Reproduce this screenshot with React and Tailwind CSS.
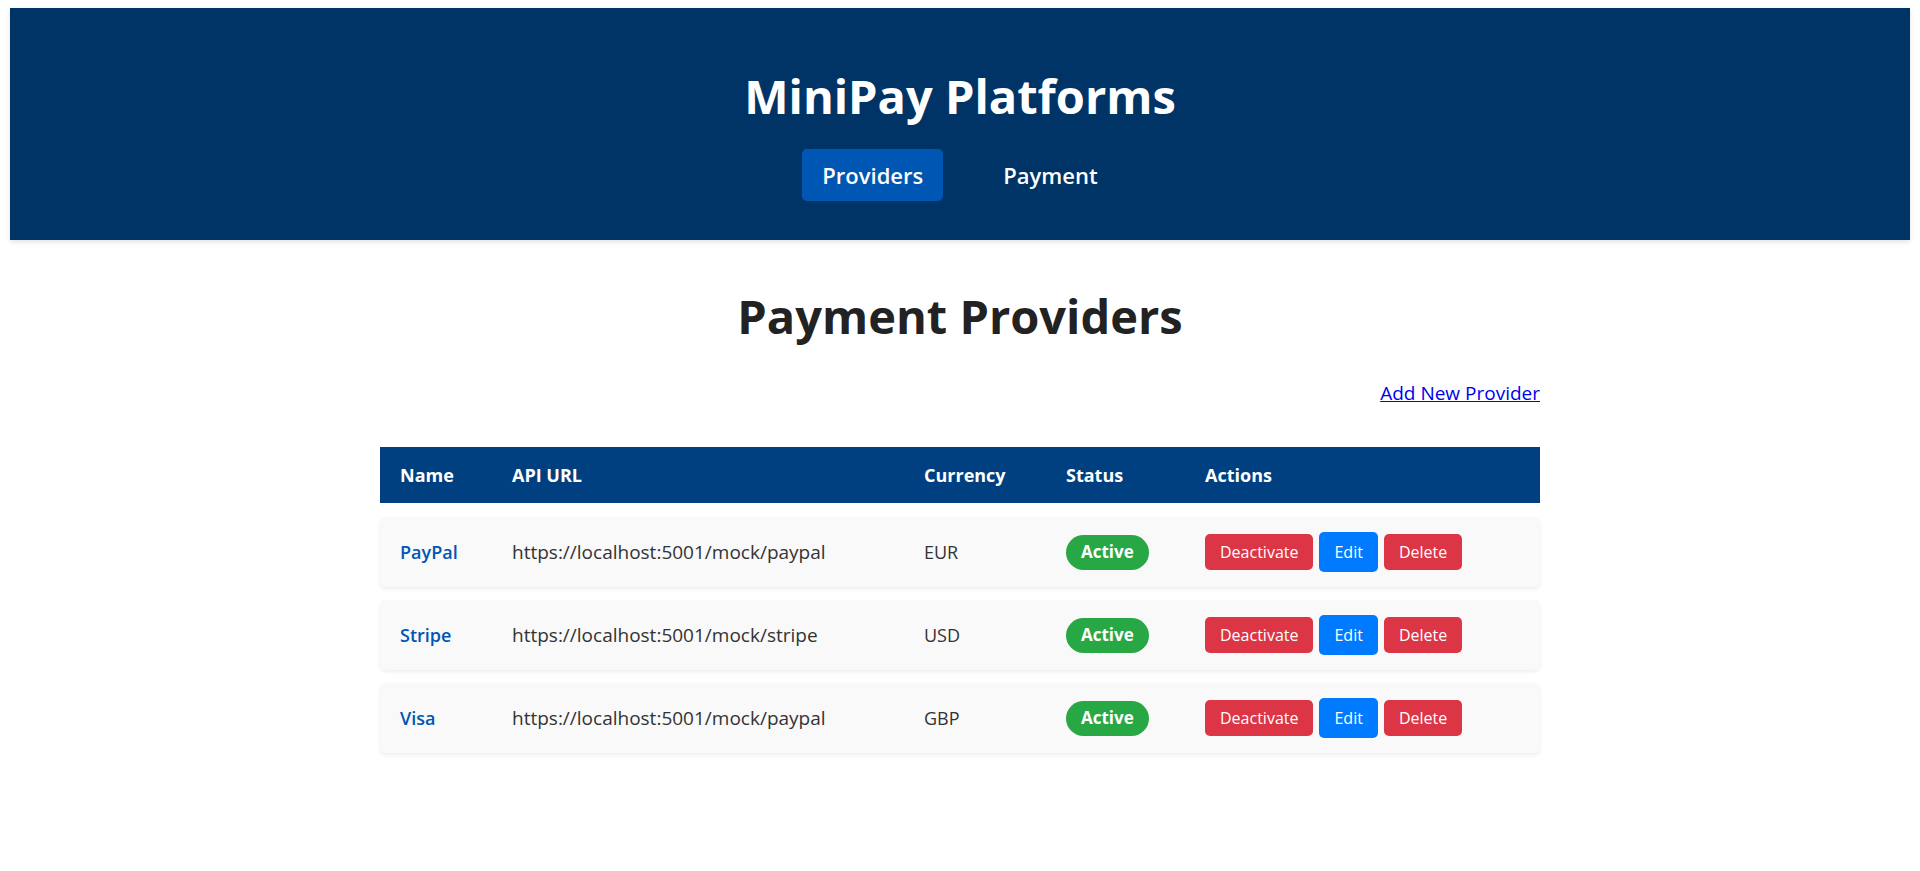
import React from "react";

const providers = [
  { name: "PayPal", url: "https://localhost:5001/mock/paypal", currency: "EUR" },
  { name: "Stripe", url: "https://localhost:5001/mock/stripe", currency: "USD" },
  { name: "Visa", url: "https://localhost:5001/mock/paypal", currency: "GBP" },
];

const cols = "grid grid-cols-[112px_412px_142px_139px_1fr] items-center";

const ProviderRow = ({ item }) => (
  <div className={`${cols} h-[70px] bg-[#f9f9f9] rounded-md shadow-[0_2px_4px_rgba(0,0,0,0.07)] text-[18px] text-[#333]`}>
    <div className="px-5 font-semibold text-[#0056b3]">{item.name}</div>
    <div className="px-5 text-[19px]">{item.url}</div>
    <div className="px-5">{item.currency}</div>
    <div className="px-5">
      <span className="inline-flex h-[35px] items-center rounded-full bg-[#28a745] px-[15px] text-[17px] font-bold text-white">
        Active
      </span>
    </div>
    <div className="px-5 flex items-center gap-[6px] text-[16px] text-white">
      <button className="h-[36px] rounded-[5px] bg-[#dc3545] px-[15px]">Deactivate</button>
      <button className="h-[40px] rounded-[5px] bg-[#007bff] px-[15px]">Edit</button>
      <button className="h-[36px] rounded-[5px] bg-[#dc3545] px-[15px]">Delete</button>
    </div>
  </div>
);

export default function App() {
  return (
    <div className="min-h-screen bg-white font-['Open_Sans',sans-serif]">
      {/* Header */}
      <header className="mx-[10px] mt-2 h-[232px] pt-[60px] bg-[#003366] shadow-[0_2px_5px_rgba(0,0,0,0.12)] flex flex-col items-center">
        <h1 className="text-[47px] leading-[57px] font-bold text-white">MiniPay Platforms</h1>
        <nav className="mt-6 flex gap-10">
          <a className="h-[52px] flex items-center rounded-[5px] bg-[#0056b3] px-5 text-[22px] font-semibold text-white">
            Providers
          </a>
          <a className="h-[52px] flex items-center px-5 text-[22px] font-semibold text-white">Payment</a>
        </nav>
      </header>

      {/* Content */}
      <main className="mx-auto w-[1160px]">
        <h2 className="mt-[47px] text-center text-[47px] leading-[58px] font-bold text-[#222]">Payment Providers</h2>
        <div className="mt-[35px] flex justify-end">
          <a href="#" className="text-[19px] leading-[26px] text-[#0000ee] underline">
            Add New Provider
          </a>
        </div>

        <div className={`${cols} mt-[41px] h-[56px] bg-[#004080] text-[18px] font-bold text-white`}>
          <div className="px-5">Name</div>
          <div className="px-5">API URL</div>
          <div className="px-5">Currency</div>
          <div className="px-5">Status</div>
          <div className="px-5">Actions</div>
        </div>

        <div className="mt-[14px] flex flex-col gap-[13px]">
          {providers.map((p) => (
            <ProviderRow key={p.name} item={p} />
          ))}
        </div>
      </main>
    </div>
  );
}
